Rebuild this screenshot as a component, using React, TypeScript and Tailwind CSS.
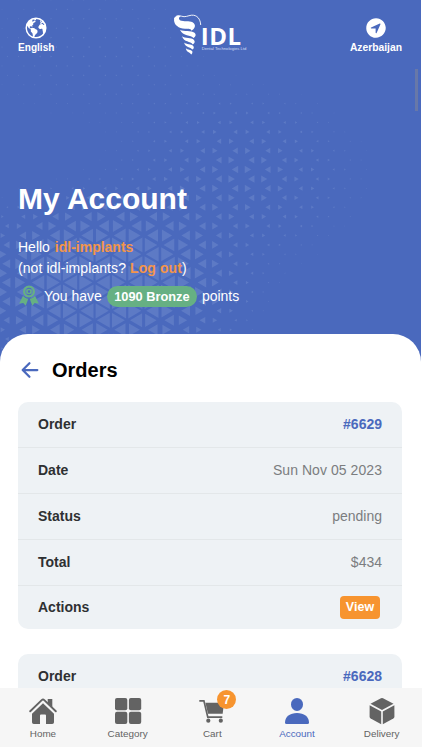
import React from "react";
import type { ReactNode } from "react";
import { IoArrowBack, IoEarth, IoNavigateCircle } from "react-icons/io5";

// [center x, center y, radius x, radius y, strength, falloff]
const blobs = [
  [104, 282, 118, 76, 0.9, 1.5],
  [240, 177, 90, 64, 0.4, 1],
  [90, 50, 120, 75, 0.1, 1.5],
];

function triangleSize(x: number, y: number) {
  let size = 0;
  for (const [cx, cy, rx, ry, strength, falloff] of blobs) {
    const d = ((x - cx) / rx) ** 2 + ((y - cy) / ry) ** 2;
    size += strength * Math.exp(-(d ** falloff));
  }
  return Math.min(size, 0.8);
}

function TrianglePattern() {
  const rowHeight = 9.42;
  const colWidth = 16.32;
  const points: string[] = [];
  for (let row = -16; row < 22; row++) {
    const y = 150.7 + row * rowHeight;
    const shift = row % 2 === 0 ? 0 : colWidth;
    for (let col = -8; col < 7; col++) {
      const edge = 208.8 + shift + col * colWidth * 2;
      for (const dir of [-1, 1]) {
        const cx = edge + (dir * colWidth) / 3;
        const k = triangleSize(cx, y);
        if (k < 0.045) continue;
        const base = cx - (dir * colWidth * k) / 3;
        const tip = cx + (dir * colWidth * k * 2) / 3;
        points.push(
          `M${base.toFixed(1)} ${(y - rowHeight * k).toFixed(1)}L${tip.toFixed(1)} ${y.toFixed(1)}L${base.toFixed(1)} ${(y + rowHeight * k).toFixed(1)}Z`
        );
      }
    }
  }
  return (
    <svg
      className="absolute top-0 left-0"
      width="421"
      height="362"
      viewBox="0 0 421 362"
      fill="#5d7ac5"
    >
      <path d={points.join("")} />
    </svg>
  );
}

function Logo() {
  return (
    <div className="flex h-[42px] w-[75px]">
      <svg
        width="29"
        height="42"
        viewBox="0 0 29 42"
        fill="#fff"
        className="shrink-0"
      >
        <path
          d="M1.5 5C2.5 1.5 5.5 1 8.500 2.200C12 3.600 15 1.600 18.500 1.200C24 0.700 27.500 5 27.700 11"
          fill="none"
          stroke="#fff"
          strokeWidth="0.9"
        />
        <path d="M1 6C1 2.500 4.500 0.800 8 2.300C5 3.500 5.500 6 8.500 6.800C12.500 7.800 18 6.400 20.800 9.200C23.200 12 21.500 14.800 18.300 16.800C18.500 14.800 15.500 14.900 12 14.800C5.500 14.400 1.200 11 1 6Z" />
        <path d="M7 15.800C11 18 18 16 21.500 18.800C23.600 20.800 22.500 22.800 20.500 24C18 20.800 10 22.500 7 15.800Z" />
        <path d="M9 22.300C12 24.800 18.500 23.200 21 26C22.500 28 21.500 29.500 19.800 30.400C17.500 27 11 28.500 9 22.300Z" />
        <path d="M11 28.500C13 30.600 18.500 29.600 20.300 32C21.400 33.800 20.500 35 19.400 35.600C17.500 32.600 12.500 34 11 28.500Z" />
        <path d="M12.800 34.300C14.500 36 18 35.500 19.300 37.200C19.700 38.800 19 40 18.200 40.600C16.800 38 13.500 38.500 12.800 34.300Z" />
      </svg>
      <div className="flex flex-col pt-[13px]">
        <span className="-ml-px h-[19px] font-['Open_Sans',sans-serif] text-[24px] leading-[17px] font-bold tracking-[0.6px] text-white">
          IDL
        </span>
        <span className="text-[4.2px] leading-[5px] whitespace-nowrap text-[#d5def5]">
          Dental Technologies Ltd
        </span>
      </div>
    </div>
  );
}

function AwardIcon() {
  return (
    <svg width="22" height="22" viewBox="0 0 22 22" fill="#66b083">
      <circle cx="11" cy="6.500" r="4.900" fill="none" stroke="#66b083" strokeWidth="2.200" />
      <circle cx="11" cy="6.500" r="2" fill="none" stroke="#66b083" strokeWidth="1.500" />
      <path d="M5 10.800C6.400 12.600 8.200 13.600 10.300 13.700L7.700 20.800L5.300 17.900L1.200 18.500Z" />
      <path d="M17 10.800C15.600 12.600 13.800 13.600 11.700 13.700L14.300 20.800L16.700 17.900L20.800 18.500Z" />
    </svg>
  );
}

function HomeIcon() {
  return (
    <svg width="28" height="28" viewBox="0 0 28 28" fill="currentColor">
      <path d="M18.700 2H23.300V10L18.700 6Z" />
      <path
        d="M1.200 14.300L12.700 3.100Q14 1.900 15.300 3.100L26.800 14.300"
        fill="none"
        stroke="currentColor"
        strokeWidth="1.900"
        strokeLinecap="round"
      />
      <path d="M14 6.300L25 16.700V25.200Q25 27 23.200 27H17V18.500Q17 17.500 16 17.500H12Q11 17.500 11 18.500V27H4.800Q3 27 3 25.200V16.700Z" />
    </svg>
  );
}

function CategoryIcon() {
  return (
    <svg width="28" height="28" viewBox="0 0 28 28" fill="currentColor">
      <rect x="1" y="1" width="12.300" height="12.300" rx="2" />
      <rect x="14.900" y="1" width="12.300" height="12.300" rx="2" />
      <rect x="1" y="14.700" width="12.300" height="12.300" rx="2" />
      <rect x="14.900" y="14.700" width="12.300" height="12.300" rx="2" />
    </svg>
  );
}

function CartIcon() {
  return (
    <svg width="28" height="28" viewBox="0 0 28 28" fill="currentColor">
      <path
        d="M1.300 3.900H5.900L9.800 20.100H24.300"
        fill="none"
        stroke="currentColor"
        strokeWidth="1.700"
      />
      <path d="M7.400 5.800H26L24.700 16.800H10Z" />
      <circle cx="10.300" cy="23.700" r="2.100" />
      <circle cx="22.800" cy="23.700" r="2.100" />
    </svg>
  );
}

function AccountIcon() {
  return (
    <svg width="28" height="28" viewBox="0 0 28 28" fill="currentColor">
      <ellipse cx="14" cy="7.400" rx="6" ry="6.500" />
      <path d="M2 25.500C2.200 19.500 7 16 14 16S25.800 19.500 26 25.500Q26 27 24.500 27H3.500Q2 27 2 25.500Z" />
    </svg>
  );
}

function DeliveryIcon() {
  return (
    <svg width="28" height="28" viewBox="0 0 28 28" fill="currentColor">
      <path d="M13 1.200Q14 0.700 15 1.200L25.500 6.700L14 12.900L2.500 6.700Z" />
      <path d="M1.600 8.300L13.200 14.500V27.200L2.700 21.500Q1.600 20.900 1.600 19.600Z" />
      <path d="M26.400 8.300L14.800 14.500V27.200L25.300 21.500Q26.400 20.900 26.400 19.600Z" />
    </svg>
  );
}

function Row({ label, children }: { label: string; children: ReactNode }) {
  return (
    <div className="flex h-[46px] items-center justify-between border-b border-[#e3e7e9] px-5 pb-px text-sm text-[#7b7d7f] last:h-[43px] last:border-b-0">
      <span className="font-bold text-[#2e3032]">{label}</span>
      {children}
    </div>
  );
}

function NavItem({
  icon,
  label,
  active,
  badge,
}: {
  icon: ReactNode;
  label: string;
  active?: boolean;
  badge?: string;
}) {
  return (
    <div
      className={
        active
          ? "flex w-[84.7px] shrink-0 flex-col items-center pt-[9px] text-[#4a69bd]"
          : "flex w-[84.7px] shrink-0 flex-col items-center pt-[9px] text-[#636363]"
      }
    >
      <div className="relative flex h-[28px] items-center">
        {icon}
        {badge && (
          <span className="absolute -top-[7px] left-[19px] flex size-[19px] items-center justify-center rounded-full bg-[#f7942f] text-xs font-bold text-white">
            {badge}
          </span>
        )}
      </div>
      <span className="mt-[3px] text-[9.9px] leading-3">{label}</span>
    </div>
  );
}

export default function App() {
  return (
    <div className="relative flex h-[750px] w-[422px] flex-col overflow-hidden bg-white font-['Liberation_Sans',Arial,sans-serif]">
      <div className="relative h-[362px] w-[421px] shrink-0 bg-[#4a69bd] text-white">
        <TrianglePattern />
        <div className="relative flex h-[60px] justify-between pr-[19px] pl-[18px]">
          <div className="flex flex-col items-center pt-4">
            <IoEarth className="size-6" />
            <span className="mt-[2px] text-[10.1px] leading-3 font-bold">English</span>
          </div>
          <div className="pt-[14px] pl-4">
            <Logo />
          </div>
          <div className="flex flex-col items-center pt-4">
            <IoNavigateCircle className="size-6" />
            <span className="mt-[2px] text-[10.3px] leading-3 font-bold">Azerbaijan</span>
          </div>
        </div>
        <div className="absolute top-[69px] right-[3px] h-[42px] w-[3px] bg-[#6878a8]" />
        <div className="relative px-[18px] pt-[121px]">
          <h1 className="text-[30px] leading-9 font-bold">My Account</h1>
          <div className="mt-[19px] text-sm leading-[22px]">
            <p>
              Hello <span className="ml-px font-bold text-[#f4954a]">idl-implants</span>
            </p>
            <p className="-mt-px tracking-[0.08px]">
              (not idl-implants? <span className="font-bold text-[#f4954a]">Log out</span>)
            </p>
          </div>
          <div className="mt-[6px] flex h-[22px] items-center text-sm">
            <AwardIcon />
            <span className="ml-1">You have</span>
            <span className="ml-[5px] h-[21px] w-[90px] rounded-full bg-[#66b083] text-center text-[12.8px] leading-[21px] font-bold">
              1090 Bronze
            </span>
            <span className="ml-[5px]">points</span>
          </div>
        </div>
      </div>

      <div className="relative -mt-[28px] h-[354px] w-[421px] shrink-0 overflow-hidden rounded-t-[28px] bg-white px-[18px]">
        <div className="flex h-[68px] items-center pt-[3px]">
          <IoArrowBack className="size-6 text-[#4a69bd]" />
          <h2 className="ml-[10px] text-xl font-bold text-black">Orders</h2>
        </div>
        <div className="mr-px overflow-hidden rounded-[10px] bg-[#eef2f5]">
          <Row label="Order">
            <span className="font-bold text-[#4a69bd]">#6629</span>
          </Row>
          <Row label="Date">
            <span className="tracking-[0.06px]">Sun Nov 05 2023</span>
          </Row>
          <Row label="Status">
            <span>pending</span>
          </Row>
          <Row label="Total">
            <span>$434</span>
          </Row>
          <Row label="Actions">
            <button className="mr-[2px] h-[23px] w-10 rounded-[4px] bg-[#f7942f] text-[12.5px] leading-[23px] font-bold text-white">
              View
            </button>
          </Row>
        </div>
        <div className="mt-[25px] mr-px rounded-t-[10px] bg-[#eef2f5]">
          <div className="flex h-[46px] items-center justify-between px-5 pb-[2px] text-sm font-bold">
            <span className="text-[#2e3032]">Order</span>
            <span className="text-[#4a69bd]">#6628</span>
          </div>
        </div>
      </div>

      <nav className="flex h-[59px] shrink-0 bg-[#f6f6f6] pl-[0.6px]">
        <NavItem icon={<HomeIcon />} label="Home" />
        <NavItem icon={<CategoryIcon />} label="Category" />
        <NavItem icon={<CartIcon />} label="Cart" badge="7" />
        <NavItem icon={<AccountIcon />} label="Account" active />
        <NavItem icon={<DeliveryIcon />} label="Delivery" />
      </nav>
    </div>
  );
}
